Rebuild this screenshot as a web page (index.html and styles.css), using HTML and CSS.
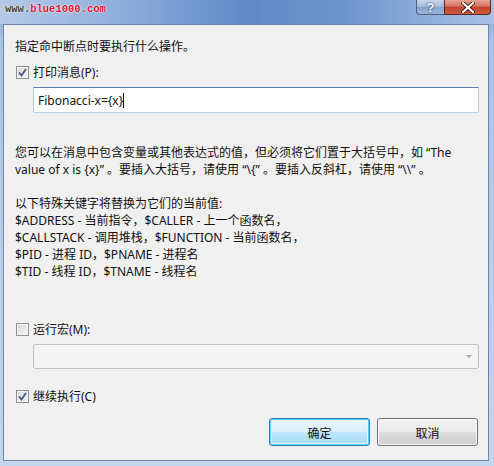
FILE: index.html
```html
<!DOCTYPE html>
<html lang="zh-CN">
<head>
    <meta charset="UTF-8">
    <title>命中断点时</title>
    <link rel="stylesheet" href="styles.css">
</head>
<body>

    <div class="window">
        <!-- Barra de título -->
        <div class="titlebar">
            <span class="watermark"><span class="www">www.</span>blue1000.com</span>
            <div class="caption-buttons">
                <div class="cap-btn help">?</div>
                <div class="cap-btn close">
                    <svg width="14" height="11" viewBox="0 0 14 11">
                        <path d="M2 1 L12 10 M12 1 L2 10" stroke="#4a1a14" stroke-width="4" stroke-linecap="round"/>
                        <path d="M2 1 L12 10 M12 1 L2 10" stroke="#ffffff" stroke-width="2.2" stroke-linecap="round"/>
                    </svg>
                </div>
            </div>
        </div>

        <div class="client">
            <p class="intro">指定命中断点时要执行什么操作。</p>

            <label class="check print">
                <span class="box checked">
                    <svg width="9" height="9" viewBox="0 0 9 9"><path d="M1 4.5 L3.5 7.5 L8 1" fill="none" stroke="#3f5a8c" stroke-width="1.8"/></svg>
                </span>
                打印消息(P):
            </label>
            <div class="textbox">Fibonacci-x={x}<span class="caret"></span></div>

            <div class="help-text">
                <p>您可以在消息中包含变量或其他表达式的值，但必须将它们置于大括号中，如 “The<br>value of x is {x}” 。要插入大括号，请使用 “\{” 。要插入反斜杠，请使用 “\\” 。</p>
                <p>以下特殊关键字将替换为它们的当前值:<br>
                $ADDRESS - 当前指令，$CALLER - 上一个函数名，<br>
                $CALLSTACK - 调用堆栈，$FUNCTION - 当前函数名，<br>
                $PID - 进程 ID，$PNAME - 进程名<br>
                $TID - 线程 ID，$TNAME - 线程名</p>
            </div>

            <label class="check macro">
                <span class="box"></span>
                运行宏(M):
            </label>
            <div class="combo"><span class="arrow"></span></div>

            <label class="check continue">
                <span class="box checked">
                    <svg width="9" height="9" viewBox="0 0 9 9"><path d="M1 4.5 L3.5 7.5 L8 1" fill="none" stroke="#3f5a8c" stroke-width="1.8"/></svg>
                </span>
                继续执行(C)
            </label>

            <div class="buttons">
                <button class="btn default">确定</button>
                <button class="btn">取消</button>
            </div>
        </div>
    </div>

</body>
</html>
```

FILE: styles.css
```css
body {
    margin: 0;
    font-family: "Noto Sans", "Noto Sans CJK SC", sans-serif;
    font-size: 12px;
    color: #111;
}
.window {
    width: 494px;
    height: 466px;
    box-sizing: border-box;
    padding: 0 5px 5px 3px;
    display: flex;
    flex-direction: column;
    background: linear-gradient(to bottom, #7e9fd2 0, #a8c2e6 40px, #c4d6ee 100%);
}
.titlebar {
    height: 24px;
    flex: none;
    margin: 0 -5px 0 -3px;
    padding: 0 3px 0 5px;
    display: flex;
    justify-content: space-between;
    align-items: flex-start;
    background: linear-gradient(to right, #b6cae7 0%, #8eaddb 25%, #5f89c7 50%, #6f95cd 70%, #a9c2e6 100%);
}
.watermark {
    font-family: "Liberation Mono", monospace;
    font-size: 10.5px;
    font-weight: bold;
    line-height: 14px;
    margin-top: 2px;
    color: #e3102c;
    text-shadow: 0 0 2px #fff, 0 0 1px #fff;
}
.www {
    color: #3a3a2a;
}
.caption-buttons {
    display: flex;
}
.cap-btn {
    height: 15px;
    box-sizing: border-box;
    border: 1px solid #4a5f83;
    border-top: none;
    display: flex;
    align-items: center;
    justify-content: center;
}
.help {
    width: 28px;
    border-bottom-left-radius: 4px;
    border-right: none;
    background: linear-gradient(to bottom, #c9d6ea 0%, #a3b7d6 50%, #8aa2c8 51%, #9fb6da 100%);
    color: #fff;
    font-family: "Liberation Sans", sans-serif;
    font-weight: bold;
    font-size: 13px;
    line-height: 13px;
    text-shadow: 0 0 2px #2b3f66, 0 0 1px #2b3f66;
}
.close {
    width: 47px;
    border-bottom-right-radius: 4px;
    border-color: #5a2a24;
    background: linear-gradient(to bottom, #e8a595 0%, #d47562 45%, #c2432f 50%, #cf5a3f 100%);
}
.client {
    flex: 1;
    box-sizing: border-box;
    border: 1px solid #6f84a6;
    background-color: #f0f0f0;
    padding: 13px 10px 0 11px;
    line-height: 17px;
}
.intro {
    margin: 0;
}
.check {
    display: flex;
    align-items: center;
    height: 17px;
}
.print {
    margin-top: 9px;
}
.box {
    width: 13px;
    height: 13px;
    box-sizing: border-box;
    border: 1px solid #8e8f8f;
    background: linear-gradient(135deg, #d8d8d8, #f7f7f7);
    box-shadow: inset 0 0 0 1px #f6f6f6;
    margin: 0 4px 0 1px;
    display: flex;
    align-items: center;
    justify-content: center;
}
.textbox {
    width: 446px;
    height: 26px;
    box-sizing: border-box;
    margin: 6px 0 0 18px;
    padding: 0 4px;
    background-color: #fff;
    border: 1px solid #b7cfe6;
    border-top-color: #5d7fa7;
    display: flex;
    align-items: center;
}
.caret {
    width: 1px;
    height: 15px;
    background-color: #000;
}
.help-text {
    margin-top: 31px;
}
.help-text p {
    margin: 0 0 17px;
    white-space: nowrap;
}
.help-text p:last-child {
    margin-bottom: 0;
}
.macro {
    margin-top: 41px;
}
.combo {
    width: 446px;
    height: 25px;
    box-sizing: border-box;
    margin: 6px 0 0 18px;
    border: 1px solid #bfc2c6;
    border-radius: 2px;
    background-color: #f4f4f4;
    display: flex;
    align-items: center;
    justify-content: flex-end;
    padding-right: 6px;
}
.arrow {
    width: 0;
    height: 0;
    border-left: 3px solid transparent;
    border-right: 3px solid transparent;
    border-top: 3px solid #a7a7a7;
}
.continue {
    margin-top: 19px;
}
.buttons {
    display: flex;
    justify-content: flex-end;
    gap: 7px;
    margin-top: 13px;
}
.btn {
    width: 101px;
    height: 28px;
    font-family: "Noto Sans CJK SC", sans-serif;
    font-size: 12px;
    color: #111;
    border: 1px solid #707070;
    border-radius: 3px;
    background: linear-gradient(to bottom, #f2f2f2 0%, #ebebeb 50%, #dddddd 51%, #cfcfcf 100%);
    box-shadow: inset 0 0 0 1px #fcfcfc;
    padding: 0;
}
.btn.default {
    border-color: #3c7fb1;
    background: linear-gradient(to bottom, #eaf6fd 0%, #d9f0fc 50%, #bee6fd 51%, #a7d9f5 100%);
    box-shadow: inset 0 0 0 1px #48d4f7, inset 0 0 0 2px #e4f6fd;
}
```
